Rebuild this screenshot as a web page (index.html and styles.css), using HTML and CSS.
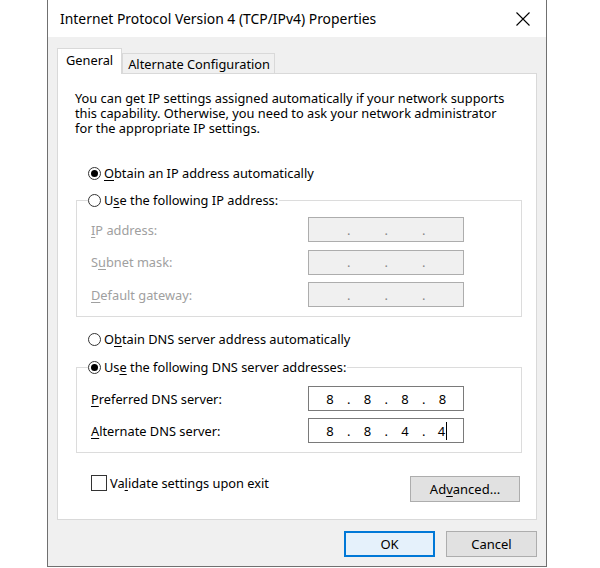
FILE: index.html
```html
<!DOCTYPE html>
<html>
<head>
<meta charset="utf-8">
<link rel="stylesheet" href="styles.css">
</head>
<body>
<div class="window">
  <div class="titlebar">
    <span class="title">Internet Protocol Version 4 (TCP/IPv4) Properties</span>
    <svg class="close" width="14" height="14" viewBox="0 0 14 14"><path d="M0.5 0.5 L13.5 13.5 M13.5 0.5 L0.5 13.5" stroke="#000" stroke-width="1.1" fill="none"/></svg>
  </div>
  <div class="client">
    <div class="tabs">
      <div class="tab active">General</div>
      <div class="tab">Alternate Configuration</div>
    </div>
    <div class="panel">
      <p class="desc">You can get IP settings assigned automatically if your network supports<br>this capability. Otherwise, you need to ask your network administrator<br>for the appropriate IP settings.</p>
      <div class="opt first"><span class="radio on"></span><span><u>O</u>btain an IP address automatically</span></div>
      <fieldset class="group g1">
        <legend><span class="radio"></span><span>U<u>s</u>e the following IP address:</span></legend>
        <div class="row dis"><span class="lbl"><u>I</u>P address:</span><div class="ipf"><span class="oct"></span><span class="dot">.</span><span class="oct"></span><span class="dot">.</span><span class="oct"></span><span class="dot">.</span><span class="oct"></span></div></div>
        <div class="row dis"><span class="lbl">S<u>u</u>bnet mask:</span><div class="ipf"><span class="oct"></span><span class="dot">.</span><span class="oct"></span><span class="dot">.</span><span class="oct"></span><span class="dot">.</span><span class="oct"></span></div></div>
        <div class="row dis"><span class="lbl"><u>D</u>efault gateway:</span><div class="ipf"><span class="oct"></span><span class="dot">.</span><span class="oct"></span><span class="dot">.</span><span class="oct"></span><span class="dot">.</span><span class="oct"></span></div></div>
      </fieldset>
      <div class="opt third"><span class="radio"></span><span>O<u>b</u>tain DNS server address automatically</span></div>
      <fieldset class="group g2">
        <legend><span class="radio on"></span><span>Us<u>e</u> the following DNS server addresses:</span></legend>
        <div class="row"><span class="lbl"><u>P</u>referred DNS server:</span><div class="ipf"><span class="oct">8</span><span class="dot">.</span><span class="oct">8</span><span class="dot">.</span><span class="oct">8</span><span class="dot">.</span><span class="oct">8</span></div></div>
        <div class="row"><span class="lbl"><u>A</u>lternate DNS server:</span><div class="ipf"><span class="oct">8</span><span class="dot">.</span><span class="oct">8</span><span class="dot">.</span><span class="oct">4</span><span class="dot">.</span><span class="oct">4<span class="caret"></span></span></div></div>
      </fieldset>
      <div class="bottomrow">
        <div class="check"><span class="box"></span><span>Va<u>l</u>idate settings upon exit</span></div>
        <button class="btn adv">Ad<u>v</u>anced...</button>
      </div>
    </div>
    <div class="buttons">
      <button class="btn ok">OK</button>
      <button class="btn">Cancel</button>
    </div>
  </div>
</div>
</body>
</html>
```
FILE: styles.css
```css
* { box-sizing: border-box; }
html, body { margin: 0; padding: 0; background: #fff; }
body {
  font-family: "Noto Sans", "Open Sans", sans-serif;
  font-size: 12.8px;
  color: #000;
}
u { text-decoration: underline; text-underline-offset: 2px; text-decoration-thickness: 1px; }
.window {
  margin-left: 47px;
  width: 500px;
  height: 567px;
  border: 1px solid #707070;
  border-top: none;
  display: flex;
  flex-direction: column;
  background: #f0f0f0;
}
.titlebar {
  height: 38px;
  background: #fff;
  display: flex;
  align-items: center;
  padding-left: 12px;
}
.title { font-size: 13.9px; flex: 1; }
.close { margin-right: 16px; }
.client {
  flex: 1;
  padding: 10px 9px 9px 9px;
  display: flex;
  flex-direction: column;
}
.tabs { display: flex; align-items: flex-end; height: 26px; }
.tab {
  border: 1px solid #d9d9d9;
  border-bottom: none;
  height: 21px;
  padding: 0 4px 0 5px;
  display: flex; align-items: center;
  background: #f0f0f0;
  margin-bottom: -1px;
}
.tab.active {
  height: 26px;
  background: #fff;
  padding: 0 8px 3px 8px;
  position: relative;
  z-index: 1;
}
.panel {
  width: 480px;
  height: 447px;
  background: #fff;
  border: 1px solid #d9d9d9;
  padding: 17px 14px 0 17px;
  display: flex;
  flex-direction: column;
}
.desc { margin: 0; line-height: 15px; }
.opt { display: flex; align-items: center; height: 16px; margin-left: 13px; }
.opt.first { margin-top: 29px; }
.opt.third { margin-top: 14px; }
.radio {
  width: 13px; height: 13px;
  border: 1px solid #333;
  border-radius: 50%;
  display: inline-flex; align-items: center; justify-content: center;
  margin-right: 3px;
  background: #fff;
  flex: none;
}
.radio.on::after {
  content: "";
  width: 7px; height: 7px; border-radius: 50%;
  background: #000;
}
.group {
  margin: 11px 0 0 1px;
  width: 446px;
  border: 1px solid #dcdcdc;
  padding: 9px 0 9px 14px;
  min-width: 0;
}
.g2 { margin-top: 12px; padding-top: 11px; }
.group legend {
  display: flex; align-items: center;
  height: 16px;
  padding: 0 1px 0 0;
  margin-left: -3px;
}
.row { display: flex; align-items: center; height: 25px; }
.row + .row { margin-top: 7.5px; }
.g2 .row + .row { margin-top: 7px; }
.lbl { width: 217px; }
.dis .lbl { color: #a0a0a0; }
.ipf {
  width: 156px; height: 25px;
  border: 1px solid #7a7a7a;
  background: #fff;
  display: flex; align-items: center;
  padding-left: 5.5px;
  font-size: 13px;
}
.dis .ipf { background: #f0f0f0; border-color: #adadad; color: #888; }
.oct { width: 31px; text-align: center; display: inline-flex; justify-content: center; align-items: center; }
.dot { width: 6.5px; text-align: center; }
.caret { display: inline-block; width: 1px; height: 18px; background: #000; margin-left: 1px; }
.bottomrow { display: flex; align-items: flex-start; justify-content: space-between; margin-top: 22px; padding-right: 2px; }
.check { display: flex; align-items: center; height: 16px; margin-left: 16px; }
.box { width: 16px; height: 16px; border: 1px solid #333; margin-right: 3px; background: #fff; }
.btn {
  font-family: inherit; font-size: 13px; color: #000;
  background: #e1e1e1;
  border: 1px solid #adadad;
  height: 26px;
  padding: 0;
  border-radius: 0;
}
.adv { width: 110px; margin-top: 1px; }
.buttons { display: flex; justify-content: flex-end; gap: 11px; margin-top: 11px; }
.buttons .btn { width: 91px; }
.ok { border: 2px solid #0078d7; background: #e5f1fb; }
```
